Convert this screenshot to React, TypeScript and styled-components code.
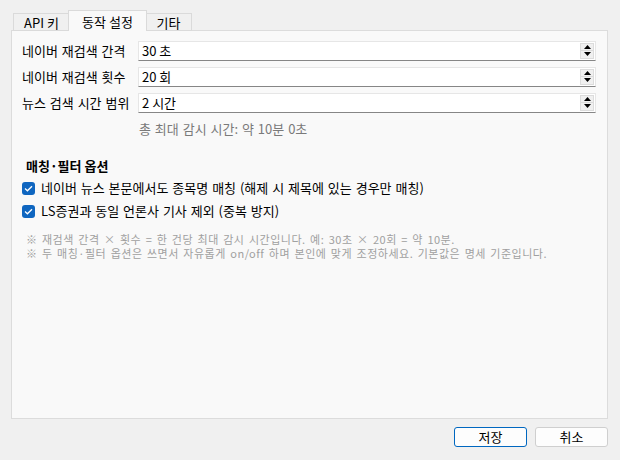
import React from "react";
import styled, { createGlobalStyle } from "styled-components";

const Global = createGlobalStyle`
  html, body { margin: 0; padding: 0; background: #f0f0f0; }
  body { font-family: "Noto Sans CJK KR", "Noto Sans", sans-serif; font-size: 13px; color: #000; }
  * { box-sizing: border-box; }
`;

const Window = styled.div`
  width: 620px;
  height: 460px;
  display: flex;
  flex-direction: column;
  padding: 11px 12px 13px 11px;
  background: #f0f0f0;
`;

const TabBar = styled.div`
  display: flex;
  align-items: flex-end;
  height: 20px;
  padding-left: 2px;
  margin-bottom: -1px;
  position: relative;
  z-index: 1;
`;

const Tab = styled.div<{ $active?: boolean; $w: number }>`
  width: ${(p) => p.$w}px;
  height: ${(p) => (p.$active ? 21 : 18)}px;
  margin: 0 ${(p) => (p.$active ? -2 : 0)}px;
  display: flex;
  align-items: center;
  justify-content: center;
  border: 1px solid #dadada;
  border-bottom: ${(p) => (p.$active ? "none" : "1px solid #dadada")};
  background: ${(p) => (p.$active ? "#f9f9f9" : "#f0f0f0")};
  position: relative;
  z-index: ${(p) => (p.$active ? 2 : 1)};
  font-size: 13px;
  line-height: 15px;
  padding-top: ${(p) => (p.$active ? 0 : 1)}px;
`;

const Pane = styled.div`
  flex: 1;
  background: #f9f9f9;
  border: 1px solid #dcdcdc;
  padding: 10px 11px 10px 10px;
  display: flex;
  flex-direction: column;
`;

const Form = styled.div`
  display: grid;
  grid-template-columns: 116px 1fr;
  row-gap: 6px;
  align-items: center;
`;

const Label = styled.div`
  font-size: 13px;
  line-height: 20px;
  white-space: nowrap;
  word-spacing: 1px;
`;

const SpinBox = styled.div`
  height: 20px;
  background: #fff;
  border: 1px solid #e6e6e6;
  border-bottom: 1px solid #868686;
  display: flex;
  align-items: center;
  padding: 0 1px 0 3px;
`;

const SpinValue = styled.div`
  flex: 1;
  font-size: 13px;
  line-height: 16px;
`;

const SpinButtons = styled.div`
  width: 14px;
  height: 16px;
  display: flex;
  flex-direction: column;
  margin-bottom: 1px;
`;

const SpinBtn = styled.div`
  flex: 1;
  background: #f0f0f0;
  border: 1px solid #dcdcdc;
  display: flex;
  align-items: center;
  justify-content: center;
  & + & { border-top: none; }
`;

const Summary = styled.div`
  grid-column: 2;
  padding-left: 1px;
  color: #7a7a7a;
  font-size: 13px;
  line-height: 16px;
  margin-top: 2px;
  word-spacing: 1px;
`;

const SectionTitle = styled.div`
  font-weight: bold;
  font-size: 13px;
  line-height: 16px;
  margin-top: 21px;
  padding-left: 4px;
`;

const CheckRow = styled.label<{ $mt: number }>`
  display: flex;
  align-items: center;
  gap: 6px;
  height: 16px;
  font-size: 13px;
  line-height: 16px;
  word-spacing: 1px;
  margin-top: ${(p) => p.$mt}px;
`;

const CheckBox = styled.span`
  width: 13px;
  height: 13px;
  border-radius: 3px;
  background: #0f66c0;
  display: inline-flex;
  align-items: center;
  justify-content: center;
  flex: none;
`;

const Notes = styled.div`
  margin-top: 13px;
  padding-left: 4px;
  color: #a0a0a0;
  font-size: 11px;
  line-height: 14px;
  letter-spacing: 0.5px;
  word-spacing: 1.5px;
`;

const ButtonRow = styled.div`
  display: flex;
  justify-content: flex-end;
  gap: 8px;
  margin-top: 8px;
`;

const Button = styled.button<{ $primary?: boolean }>`
  width: 73px;
  height: 20px;
  background: #fdfdfd;
  border: 1px solid ${(p) => (p.$primary ? "#0067c0" : "#cfcfcf")};
  border-radius: 3px;
  font-family: inherit;
  font-size: 13px;
  line-height: 16px;
  padding: 0;
  color: #000;
`;

const Up = () => (
  <svg width="7" height="4" viewBox="0 0 7 4"><path d="M0 4 L3.5 0 L7 4 Z" fill="#000" /></svg>
);
const Down = () => (
  <svg width="7" height="4" viewBox="0 0 7 4"><path d="M0 0 L3.5 4 L7 0 Z" fill="#000" /></svg>
);

const Check = () => (
  <svg width="9" height="7" viewBox="0 0 9 7">
    <path d="M1 3.6 L3.4 5.8 L8 1.2" fill="none" stroke="#fff" strokeWidth="1.3" />
  </svg>
);

const Spin = ({ value }: { value: string }) => (
  <SpinBox>
    <SpinValue>{value}</SpinValue>
    <SpinButtons>
      <SpinBtn><Up /></SpinBtn>
      <SpinBtn><Down /></SpinBtn>
    </SpinButtons>
  </SpinBox>
);

export default function App() {
  return (
    <>
      <Global />
      <Window>
        <TabBar>
          <Tab $w={57}>API 키</Tab>
          <Tab $w={79} $active>동작 설정</Tab>
          <Tab $w={47}>기타</Tab>
        </TabBar>
        <Pane>
          <Form>
            <Label>네이버 재검색 간격</Label>
            <Spin value="30 초" />
            <Label>네이버 재검색 횟수</Label>
            <Spin value="20 회" />
            <Label>뉴스 검색 시간 범위</Label>
            <Spin value="2 시간" />
            <Summary>총 최대 감시 시간: 약 10분 0초</Summary>
          </Form>
          <SectionTitle>매칭·필터 옵션</SectionTitle>
          <CheckRow $mt={6}>
            <CheckBox><Check /></CheckBox>
            네이버 뉴스 본문에서도 종목명 매칭 (해제 시 제목에 있는 경우만 매칭)
          </CheckRow>
          <CheckRow $mt={7}>
            <CheckBox><Check /></CheckBox>
            LS증권과 동일 언론사 기사 제외 (중복 방지)
          </CheckRow>
          <Notes>
            ※ 재검색 간격 × 횟수 = 한 건당 최대 감시 시간입니다. 예: 30초 × 20회 = 약 10분.
            <br />
            ※ 두 매칭·필터 옵션은 쓰면서 자유롭게 on/off 하며 본인에 맞게 조정하세요. 기본값은 명세 기준입니다.
          </Notes>
        </Pane>
        <ButtonRow>
          <Button $primary>저장</Button>
          <Button>취소</Button>
        </ButtonRow>
      </Window>
    </>
  );
}
